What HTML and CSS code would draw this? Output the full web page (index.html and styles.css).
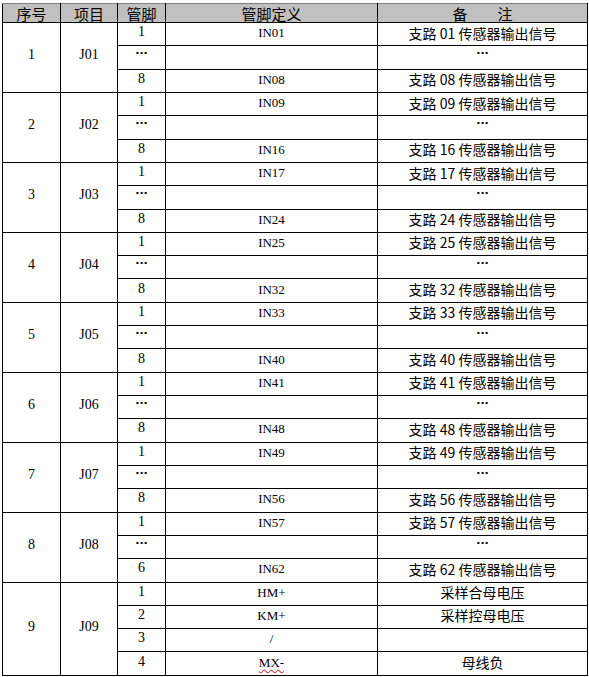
FILE: index.html
```html
<!DOCTYPE html>
<html lang="zh-CN">
<head>
<meta charset="utf-8">
<title>管脚定义表</title>
<link rel="stylesheet" href="styles.css">
</head>
<body>
<table class="sheet">
  <colgroup>
    <col class="c-seq"><col class="c-item"><col class="c-pin"><col class="c-def"><col class="c-note">
  </colgroup>
  <thead>
    <tr><th>序号</th><th>项目</th><th>管脚</th><th>管脚定义</th><th>备　　注</th></tr>
  </thead>
  <tbody>
    <tr><td class="num" rowspan="3">1</td><td class="num" rowspan="3">J01</td><td class="num">1</td><td class="def">IN01</td><td class="note">支路 01 传感器输出信号</td></tr>
    <tr><td class="dots">...</td><td class="def"></td><td class="dots">...</td></tr>
    <tr><td class="num">8</td><td class="def">IN08</td><td class="note">支路 08 传感器输出信号</td></tr>

    <tr><td class="num" rowspan="3">2</td><td class="num" rowspan="3">J02</td><td class="num">1</td><td class="def">IN09</td><td class="note">支路 09 传感器输出信号</td></tr>
    <tr><td class="dots">...</td><td class="def"></td><td class="dots">...</td></tr>
    <tr><td class="num">8</td><td class="def">IN16</td><td class="note">支路 16 传感器输出信号</td></tr>

    <tr><td class="num" rowspan="3">3</td><td class="num" rowspan="3">J03</td><td class="num">1</td><td class="def">IN17</td><td class="note">支路 17 传感器输出信号</td></tr>
    <tr><td class="dots">...</td><td class="def"></td><td class="dots">...</td></tr>
    <tr><td class="num">8</td><td class="def">IN24</td><td class="note">支路 24 传感器输出信号</td></tr>

    <tr><td class="num" rowspan="3">4</td><td class="num" rowspan="3">J04</td><td class="num">1</td><td class="def">IN25</td><td class="note">支路 25 传感器输出信号</td></tr>
    <tr><td class="dots">...</td><td class="def"></td><td class="dots">...</td></tr>
    <tr><td class="num">8</td><td class="def">IN32</td><td class="note">支路 32 传感器输出信号</td></tr>

    <tr><td class="num" rowspan="3">5</td><td class="num" rowspan="3">J05</td><td class="num">1</td><td class="def">IN33</td><td class="note">支路 33 传感器输出信号</td></tr>
    <tr><td class="dots">...</td><td class="def"></td><td class="dots">...</td></tr>
    <tr><td class="num">8</td><td class="def">IN40</td><td class="note">支路 40 传感器输出信号</td></tr>

    <tr><td class="num" rowspan="3">6</td><td class="num" rowspan="3">J06</td><td class="num">1</td><td class="def">IN41</td><td class="note">支路 41 传感器输出信号</td></tr>
    <tr><td class="dots">...</td><td class="def"></td><td class="dots">...</td></tr>
    <tr><td class="num">8</td><td class="def">IN48</td><td class="note">支路 48 传感器输出信号</td></tr>

    <tr><td class="num" rowspan="3">7</td><td class="num" rowspan="3">J07</td><td class="num">1</td><td class="def">IN49</td><td class="note">支路 49 传感器输出信号</td></tr>
    <tr><td class="dots">...</td><td class="def"></td><td class="dots">...</td></tr>
    <tr><td class="num">8</td><td class="def">IN56</td><td class="note">支路 56 传感器输出信号</td></tr>

    <tr><td class="num" rowspan="3">8</td><td class="num" rowspan="3">J08</td><td class="num">1</td><td class="def">IN57</td><td class="note">支路 57 传感器输出信号</td></tr>
    <tr><td class="dots">...</td><td class="def"></td><td class="dots">...</td></tr>
    <tr><td class="num">6</td><td class="def">IN62</td><td class="note">支路 62 传感器输出信号</td></tr>

    <tr><td class="num" rowspan="4">9</td><td class="num" rowspan="4">J09</td><td class="num">1</td><td class="def">HM+</td><td class="note">采样合母电压</td></tr>
    <tr><td class="num">2</td><td class="def">KM+</td><td class="note">采样控母电压</td></tr>
    <tr><td class="num">3</td><td class="def">/</td><td class="note"></td></tr>
    <tr><td class="num">4</td><td class="def"><span class="spell">MX-</span></td><td class="note">母线负</td></tr>
  </tbody>
</table>
</body>
</html>
```
FILE: styles.css
```css
html, body {
  margin: 0;
  padding: 0;
  background: #ffffff;
}

.sheet {
  border-collapse: collapse;
  table-layout: fixed;
  width: 585px;
  margin: 3px 0 0 2px;
  color: #000000;
}

.c-seq { width: 58px; }
.c-item { width: 57px; }
.c-pin { width: 48px; }
.c-def { width: 212px; }
.c-note { width: 210px; }

.sheet th,
.sheet td {
  border: 1px solid #000000;
  padding: 0;
  text-align: center;
  vertical-align: middle;
  white-space: nowrap;
  overflow: hidden;
}

.sheet th {
  height: 18px;
  background: #c0c0c0;
  border-top-color: #7f7f7f;
  font-family: "Noto Sans CJK SC", sans-serif;
  font-size: 15px;
  font-weight: normal;
  line-height: 17px;
}

.sheet tbody tr {
  height: 23.32px;
}

.num {
  font-family: "Liberation Serif", serif;
  font-size: 14px;
  line-height: 16px;
}

.sheet td.num {
  padding-bottom: 4px;
}

.def {
  font-family: "Liberation Serif", serif;
  font-size: 13px;
  line-height: 15px;
}

.sheet td.def {
  padding-bottom: 3px;
}

.note {
  font-family: "Noto Sans CJK SC", sans-serif;
  font-size: 14px;
  line-height: 18px;
}

.sheet td.note {
  padding-bottom: 3px;
}

.dots {
  font-family: "DejaVu Sans", sans-serif;
  font-size: 11px;
  font-weight: bold;
  line-height: 9px;
}

.sheet td.dots {
  vertical-align: top;
  padding-top: 0;
}

.spell {
  text-decoration: underline wavy #e00000;
  text-decoration-thickness: 1px;
  text-underline-offset: 2px;
}
```
